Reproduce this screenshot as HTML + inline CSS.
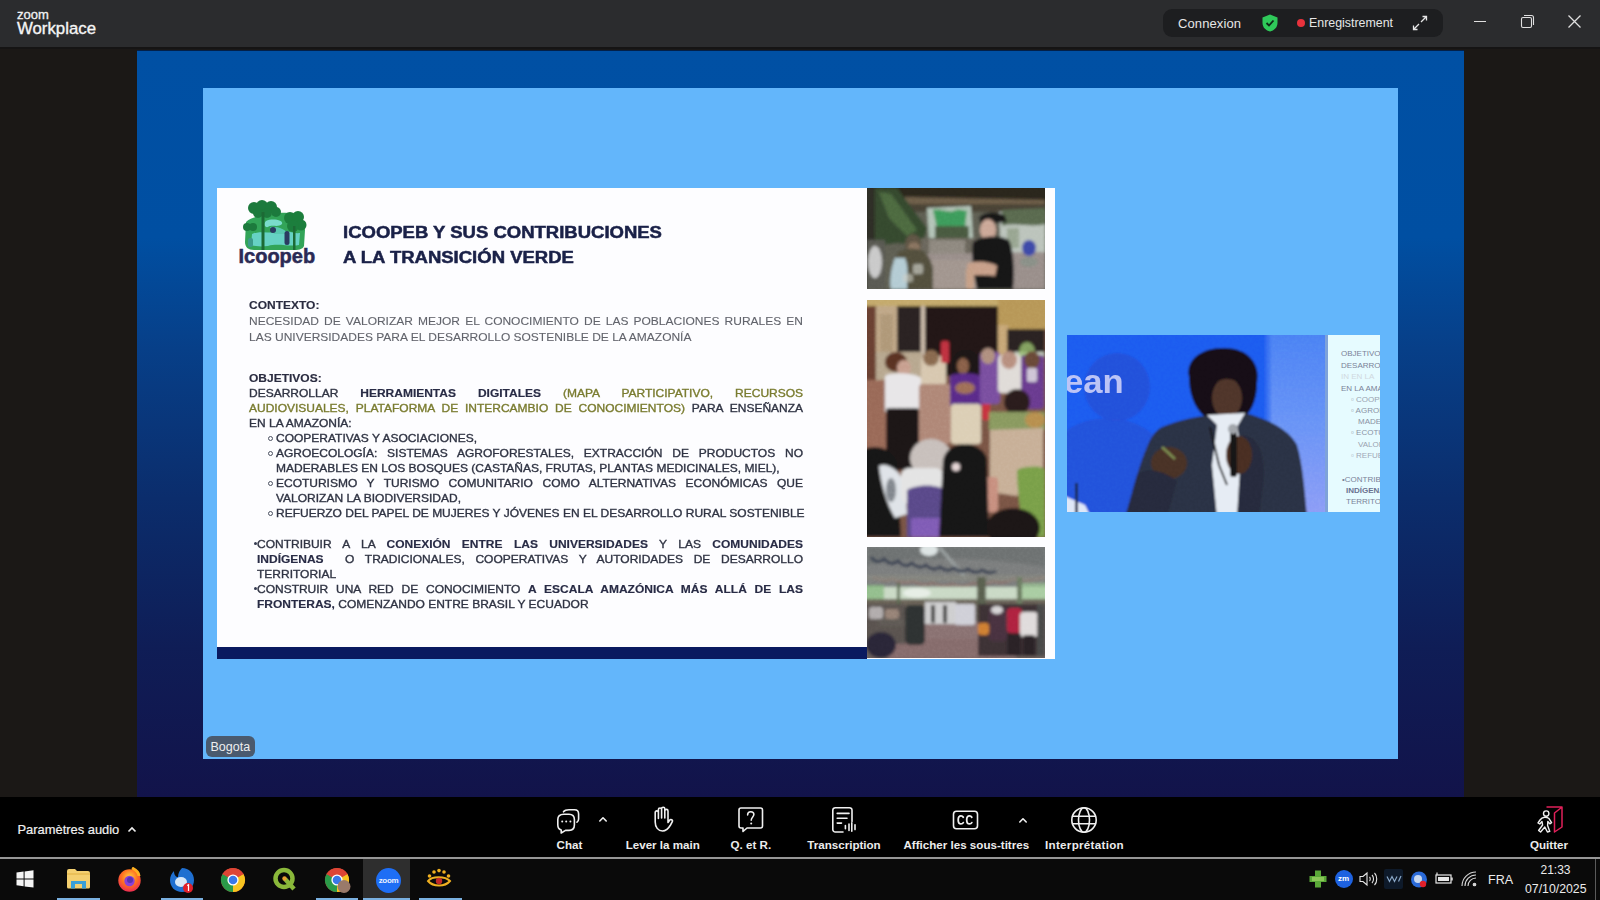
<!DOCTYPE html>
<html><head><meta charset="utf-8">
<style>
*{margin:0;padding:0;box-sizing:border-box}
html,body{width:1600px;height:900px;overflow:hidden;background:#1b1816;font-family:"Liberation Sans",sans-serif;position:relative}
.abs{position:absolute}
.t{position:absolute;white-space:nowrap;line-height:1}
#title{left:0;top:0;width:1600px;height:47px;background:#2b2c2e}
#strip{left:0;top:47px;width:1600px;height:1.5px;background:#151414}
#share{left:136.5px;top:51px;width:1327.5px;height:746px;background:linear-gradient(to bottom,#0050a4 0%,#004fa2 25%,#073f88 40%,#0b2d6c 60%,#0f1d56 80%,#12134a 100%)}
#lb{left:203px;top:88px;width:1195px;height:671px;background:#63b6fb}
#slide{left:217px;top:188px;width:838px;height:471px;background:#fdfdff}
#toolbar{left:0;top:796px;width:1600px;height:62px;background:linear-gradient(to bottom,transparent 0,transparent 1px,#000 1px)}
#sep{left:0;top:857px;width:1600px;height:2px;background:#969696}
#taskbar{left:0;top:859px;width:1600px;height:41px;background:#0a0a0a}
.lbl{position:absolute;white-space:nowrap;line-height:1;color:#ececec;font-size:11.6px;font-weight:700}
.ico{position:absolute;fill:none;stroke:#f0f0f0;stroke-width:1.6;stroke-linecap:round;stroke-linejoin:round}

.st{position:absolute;white-space:nowrap;line-height:1;font-size:11px;transform:scaleX(1.09);transform-origin:0 0;-webkit-text-stroke:0.35px currentColor}
.j{text-align:justify;text-align-last:justify;white-space:normal}
.g1{color:#62646c;-webkit-text-stroke:0.1px currentColor}
.g2{color:#303444}
.nv{color:#282b45;font-weight:700;-webkit-text-stroke:0.15px currentColor}
.ol{color:#7a7c30}
.bul{position:absolute;width:5px;height:5px;border:1px solid #4a5060;border-radius:50%}
.dot{position:absolute;width:3px;height:3px;background:#333a50;border-radius:50%}
.ttl{position:absolute;white-space:nowrap;line-height:1;font-size:16px;font-weight:700;color:#1a2148;transform:scaleX(1.156);transform-origin:0 0;-webkit-text-stroke:0.5px currentColor}
</style></head><body>
<div id="title" class="abs">
  <div class="t" style="left:17px;top:7.5px;font-size:13px;color:#f2f2f2;-webkit-text-stroke:0.3px #f2f2f2">zoom</div>
  <div class="t" style="left:17px;top:21.2px;font-size:16.8px;color:#f5f5f5;-webkit-text-stroke:0.35px #f5f5f5">Workplace</div>
  <div class="abs" style="left:1163px;top:9px;width:280px;height:28px;border-radius:9px;background:#1d1e20"></div>
  <div class="t" style="left:1178px;top:16.5px;font-size:13px;color:#e6e6e6;letter-spacing:0.1px">Connexion</div>
  <svg class="abs" style="left:1260px;top:13px" width="20" height="20" viewBox="0 0 20 20"><path d="M10 1.5 L17.5 4.5 V10 C17.5 14.5 14 17.5 10 18.5 C6 17.5 2.5 14.5 2.5 10 V4.5 Z" fill="#2fc95a"/><path d="M6.5 10 L9 12.5 L13.5 7.5" stroke="#0f2a18" stroke-width="1.8" fill="none"/></svg>
  <div class="abs" style="left:1296.5px;top:19px;width:8px;height:8px;border-radius:50%;background:#e8323c"></div>
  <div class="t" style="left:1309px;top:16.5px;font-size:12.4px;color:#e6e6e6">Enregistrement</div>
  <svg class="abs" style="left:1411px;top:14px" width="18" height="18" viewBox="0 0 18 18" fill="none" stroke="#e6e6e6" stroke-width="1.3"><path d="M10 8 L15.5 2.5 M11.5 2.5 H15.5 V6.5 M8 10 L2.5 15.5 M2.5 11.5 V15.5 H6.5"/></svg>
  <div class="abs" style="left:1474px;top:21px;width:12px;height:1.2px;background:#e0e0e0"></div>
  <svg class="abs" style="left:1520px;top:14px" width="15" height="15" viewBox="0 0 15 15" fill="none" stroke="#e0e0e0" stroke-width="1.1"><rect x="1.5" y="3.5" width="10" height="10" rx="1.5"/><path d="M4 1.5 H11.5 A2 2 0 0 1 13.5 3.5 V11"/></svg>
  <svg class="abs" style="left:1567px;top:14px" width="15" height="15" viewBox="0 0 15 15" stroke="#e0e0e0" stroke-width="1.3"><path d="M1.5 1.5 L13.5 13.5 M13.5 1.5 L1.5 13.5"/></svg>
</div>
<div id="strip" class="abs"></div>
<div id="share" class="abs"></div>
<div class="abs" style="left:136.5px;top:50px;width:1327.5px;height:1px;background:#02204a"></div>
<div id="lb" class="abs"></div>

<div id="slide" class="abs"></div>
<div class="ttl" style="left:343px;top:224.8px">ICOOPEB Y SUS CONTRIBUCIONES</div>
<div class="ttl" style="left:343px;top:250px">A LA TRANSICIÓN VERDE</div>
<svg class="abs" style="left:238px;top:200px" width="72" height="54" viewBox="0 0 72 54">
<defs><filter id="bl"><feGaussianBlur stdDeviation="0.6"/></filter></defs>
<g filter="url(#bl)">
<path d="M8 22 C12 17 22 16 34 14 C44 12 56 12 64 16 L67 30 L66 46 C64 51 56 50 48 50 L16 50 C10 50 7 47 7 42 Z" fill="#30a458"/>
<path d="M14 34 C22 30 34 34 42 32 C50 30 56 34 62 33 L61 45 C52 47 40 43 30 46 C22 47 16 46 13 45 Z" fill="#66d2c4"/>
<path d="M28 21 C34 18 46 20 44 24 C40 28 34 24 30 27 C27 28 25 24 28 21 Z" fill="#7adccc"/>
<path d="M32 27 C40 26 48 30 50 34 L36 34 Z" fill="#58c8b0"/>
<circle cx="16" cy="8" r="6" fill="#1e7a3c"/><circle cx="24" cy="6" r="6" fill="#1e7a3c"/><circle cx="33" cy="7" r="6" fill="#1e7a3c"/><circle cx="38" cy="12" r="5" fill="#1e7a3c"/><circle cx="20" cy="13" r="5" fill="#1e7a3c"/><circle cx="29" cy="13" r="5" fill="#1e7a3c"/>
<circle cx="52" cy="18" r="6" fill="#1f7e3c"/><circle cx="60" cy="17" r="6" fill="#1f7e3c"/><circle cx="63" cy="25" r="5.5" fill="#1f7e3c"/><circle cx="55" cy="26" r="6" fill="#1f7e3c"/>
<circle cx="9" cy="27" r="4" fill="#1e7a3c"/><circle cx="15" cy="27" r="4" fill="#1e7a3c"/>
<rect x="23.5" y="12" width="3" height="38" fill="#1a6a34"/>
<rect x="55" y="26" width="2.5" height="24" fill="#1a6a34"/>
<circle cx="35" cy="30" r="3" fill="#2a3a60"/>
<rect x="46.5" y="31" width="5" height="14" rx="2.5" fill="#2a3a60"/>
<rect x="10" y="38" width="5" height="9" rx="2" fill="#3a9a8a"/>
</g></svg>
<div class="t" style="left:238.5px;top:246px;font-size:20px;font-weight:700;color:#2a2a55;-webkit-text-stroke:0.5px #2a2a55">Icoopeb</div>
<div class="abs" style="left:217px;top:647px;width:650px;height:12px;background:#0a1a60"></div>
<div class="st g1" style="left:249px;top:299.8px"><b class="nv" style="color:#2a2c40">CONTEXTO:</b></div>
<div class="st g1 j" style="left:249px;top:316.2px;width:508.3px">NECESIDAD DE VALORIZAR MEJOR EL CONOCIMIENTO DE LAS POBLACIONES RURALES EN</div>
<div class="st g1" style="left:249px;top:332.2px">LAS UNIVERSIDADES PARA EL DESARROLLO SOSTENIBLE DE LA AMAZONÍA</div>
<div class="st g2" style="left:249px;top:372.6px"><b class="nv" style="color:#2a2c40">OBJETIVOS:</b></div>
<div class="st g2 j" style="left:249px;top:387.6px;width:508.3px">DESARROLLAR <b class="nv">HERRAMIENTAS DIGITALES</b> <span class="ol">(MAPA PARTICIPATIVO, RECURSOS</span></div>
<div class="st g2 j" style="left:249px;top:402.6px;width:508.3px"><span class="ol">AUDIOVISUALES, PLATAFORMA DE INTERCAMBIO DE CONOCIMIENTOS)</span> PARA ENSEÑANZA</div>
<div class="st g2" style="left:249px;top:417.6px">EN LA AMAZONÍA:</div>
<div class="st g2" style="left:276px;top:432.6px">COOPERATIVAS Y ASOCIACIONES,</div>
<div class="st g2 j" style="left:276px;top:447.6px;width:483.5px">AGROECOLOGÍA: SISTEMAS AGROFORESTALES, EXTRACCIÓN DE PRODUCTOS NO</div>
<div class="st g2" style="left:276px;top:462.6px">MADERABLES EN LOS BOSQUES (CASTAÑAS, FRUTAS, PLANTAS MEDICINALES, MIEL),</div>
<div class="st g2 j" style="left:276px;top:477.6px;width:483.5px">ECOTURISMO Y TURISMO COMUNITARIO COMO ALTERNATIVAS ECONÓMICAS QUE</div>
<div class="st g2" style="left:276px;top:492.6px">VALORIZAN LA BIODIVERSIDAD,</div>
<div class="st g2" style="left:276px;top:507.6px">REFUERZO DEL PAPEL DE MUJERES Y JÓVENES EN EL DESARROLLO RURAL SOSTENIBLE</div>
<div class="st g2 j" style="left:257px;top:538.6px;width:500.9px">CONTRIBUIR A LA <b class="nv">CONEXIÓN ENTRE LAS UNIVERSIDADES</b> Y LAS <b class="nv">COMUNIDADES</b></div>
<div class="st g2 j" style="left:257px;top:553.6px;width:500.9px"><b class="nv">INDÍGENAS</b>&nbsp; O TRADICIONALES, COOPERATIVAS Y AUTORIDADES DE DESARROLLO</div>
<div class="st g2" style="left:257px;top:568.6px">TERRITORIAL</div>
<div class="st g2 j" style="left:257px;top:583.6px;width:500.9px">CONSTRUIR UNA RED DE CONOCIMIENTO <b class="nv">A ESCALA AMAZÓNICA MÁS ALLÁ DE LAS</b></div>
<div class="st g2" style="left:257px;top:598.6px"><b class="nv">FRONTERAS,</b> COMENZANDO ENTRE BRASIL Y ECUADOR</div>
<div class="bul" style="left:267.5px;top:435.9px"></div>
<div class="bul" style="left:267.5px;top:450.9px"></div>
<div class="bul" style="left:267.5px;top:480.9px"></div>
<div class="bul" style="left:267.5px;top:510.9px"></div>
<div class="dot" style="left:253.5px;top:541.9px"></div>
<div class="dot" style="left:253.5px;top:586.9px"></div>
<svg class="abs" style="left:867px;top:188px" width="178" height="101" viewBox="0 0 178 101"><defs><filter id="ph1" x="-5%" y="-5%" width="110%" height="110%"><feGaussianBlur stdDeviation="1.4"/></filter><clipPath id="ph1c"><rect width="178" height="101"/></clipPath></defs><filter id="ph1n"><feTurbulence type="fractalNoise" baseFrequency="0.35" numOctaves="2" seed="3"/><feColorMatrix values="0 0 0 0 0.5  0 0 0 0 0.5  0 0 0 0 0.5  0 0 0 1.2 -0.45"/></filter><g clip-path="url(#ph1c)"><g filter="url(#ph1)"><rect x="-5" y="-5" width="190" height="115" rx="0" fill="#5e5e52" opacity="1"/><rect x="-5" y="-5" width="190" height="22" rx="0" fill="#2c271e" opacity="1"/><path d="M38 9 L178 12 L178 18 L38 16 Z" fill="#6e5e4a" opacity="1"/><rect x="40" y="16" width="140" height="8" rx="0" fill="#4a4236" opacity="1"/><path d="M60 20 L104 18 L106 50 L62 52 Z" fill="#b4c4b8" opacity="1"/><path d="M66 22 C74 20 84 26 88 22 C94 20 98 24 100 22 L98 40 C90 42 80 36 70 40 Z" fill="#3c9c5c" opacity="1"/><rect x="68" y="38" width="34" height="16" rx="0" fill="#4a5a40" opacity="1"/><path d="M132 24 L178 22 L178 70 L134 66 Z" fill="#bcc4bc" opacity="1"/><path d="M135 22 L178 20 L178 36 C165 40 150 34 135 38 Z" fill="#5a6a50" opacity="1"/><rect x="140" y="40" width="12" height="20" rx="0" fill="#8a9a80" opacity="0.7"/><path d="M-5 0 L30 0 L60 40 L55 58 L30 55 L-5 60 Z" fill="#34482e" opacity="1"/><path d="M12 4 L24 6 L50 42 L40 48 L22 30 Z" fill="#4e6a40" opacity="1"/><rect x="-2" y="0" width="10" height="101" rx="0" fill="#2e2e28" opacity="1"/><rect x="54" y="50" width="80" height="22" rx="0" fill="#6a665c" opacity="1"/><rect x="62" y="52" width="36" height="14" rx="0" fill="#a8a098" opacity="0.6"/><path d="M56 66 L178 64 L178 101 L56 101 Z" fill="#9a8f8b" opacity="1"/><rect x="60" y="72" width="50" height="29" rx="0" fill="#a2968f" opacity="1"/><rect x="0" y="52" width="18" height="49" rx="0" fill="#5a5a52" opacity="1"/><ellipse cx="8" cy="74" rx="7" ry="16" fill="#cacaca" opacity="1"/><ellipse cx="46" cy="56" rx="8" ry="10" fill="#5e5444" opacity="1"/><ellipse cx="47" cy="60" rx="6" ry="6" fill="#8a7460" opacity="1"/><path d="M30 66 C34 60 46 60 54 62 C60 64 64 72 66 80 L66 101 L28 101 Z" fill="#52503e" opacity="1"/><path d="M28 70 C24 80 22 95 24 101 L40 101 C40 90 42 80 38 70 Z" fill="#b4ccd4" opacity="1"/><rect x="46" y="76" width="10" height="10" rx="2" fill="#c8c8c0" opacity="0.7"/><rect x="36" y="86" width="10" height="8" rx="2" fill="#d0d0c8" opacity="0.6"/><path d="M112 30 C114 24 132 22 138 28 L140 34 L114 36 Z" fill="#131315" opacity="1"/><ellipse cx="121" cy="42" rx="8" ry="11" fill="#cca898" opacity="1"/><path d="M106 54 C112 48 132 46 142 52 C146 60 148 80 146 101 L110 101 C106 85 104 65 106 54 Z" fill="#141318" opacity="1"/><path d="M100 76 C108 72 124 74 130 78 L128 88 C118 86 108 88 101 86 Z" fill="#c8a08a" opacity="1"/><rect x="99" y="80" width="8" height="21" rx="3" fill="#c6a088" opacity="1"/><ellipse cx="162" cy="60" rx="7" ry="8" fill="#3c4aa8" opacity="1"/><ellipse cx="162" cy="74" rx="9" ry="5" fill="#8a9088" opacity="1"/></g><rect width="178" height="101" filter="url(#ph1n)" opacity="0.18" style="mix-blend-mode:overlay"/></g></svg><svg class="abs" style="left:867px;top:300px" width="178" height="237" viewBox="0 0 178 237"><defs><filter id="ph2" x="-5%" y="-5%" width="110%" height="110%"><feGaussianBlur stdDeviation="1.6"/></filter><clipPath id="ph2c"><rect width="178" height="237"/></clipPath></defs><filter id="ph2n"><feTurbulence type="fractalNoise" baseFrequency="0.35" numOctaves="2" seed="3"/><feColorMatrix values="0 0 0 0 0.5  0 0 0 0 0.5  0 0 0 0 0.5  0 0 0 1.2 -0.45"/></filter><g clip-path="url(#ph2c)"><g filter="url(#ph2)"><rect x="-5" y="-5" width="190" height="250" rx="0" fill="#7a5444" opacity="1"/><rect x="-5" y="-5" width="190" height="11" rx="0" fill="#c4aa6c" opacity="1"/><rect x="-5" y="6" width="14" height="80" rx="0" fill="#6a4030" opacity="1"/><rect x="9" y="6" width="21" height="80" rx="0" fill="#c0a888" opacity="1"/><rect x="13" y="14" width="13" height="62" rx="0" fill="#a08a6a" opacity="0.5"/><rect x="30" y="6" width="25" height="48" rx="0" fill="#2a2020" opacity="1"/><rect x="54" y="6" width="5" height="50" rx="0" fill="#ccbcaa" opacity="1"/><rect x="58" y="6" width="74" height="70" rx="0" fill="#201818" opacity="1"/><rect x="131" y="-2" width="50" height="31" rx="0" fill="#b89858" opacity="1"/><rect x="131" y="25" width="10" height="50" rx="0" fill="#c8a878" opacity="1"/><rect x="140" y="29" width="38" height="27" rx="0" fill="#2a2420" opacity="1"/><rect x="147" y="52" width="30" height="16" rx="0" fill="#c4ccbc" opacity="1"/><ellipse cx="160" cy="52" rx="8" ry="10" fill="#9ac070" opacity="0.8"/><rect x="9" y="52" width="46" height="28" rx="0" fill="#b8a890" opacity="1"/><rect x="-5" y="80" width="30" height="75" rx="0" fill="#9a6a58" opacity="1"/><ellipse cx="29" cy="62" rx="11" ry="10" fill="#5a3020" opacity="1"/><ellipse cx="37" cy="68" rx="7" ry="8" fill="#c8a090" opacity="1"/><path d="M18 76 C22 72 48 72 54 78 L56 112 L18 112 Z" fill="#e8e6e8" opacity="1"/><rect x="19" y="108" width="33" height="62" rx="3" fill="#1e1818" opacity="1"/><rect x="54" y="56" width="25" height="30" rx="4" fill="#d8c8b0" opacity="1"/><ellipse cx="64" cy="58" rx="8" ry="8" fill="#8a6a50" opacity="1"/><rect x="52" y="84" width="32" height="60" rx="4" fill="#b08878" opacity="1"/><rect x="74" y="41" width="8" height="22" rx="2" fill="#c03040" opacity="1"/><ellipse cx="99" cy="66" rx="14" ry="16" fill="#1a1414" opacity="1"/><ellipse cx="96" cy="66" rx="6" ry="8" fill="#8a6048" opacity="1"/><path d="M83 76 C88 72 112 72 117 78 L117 106 L83 106 Z" fill="#5a2c8a" opacity="1"/><ellipse cx="98" cy="88" rx="10" ry="6" fill="#a07058" opacity="1"/><rect x="84" y="104" width="30" height="40" rx="3" fill="#dccfb6" opacity="1"/><rect x="115" y="101" width="8" height="19" rx="2" fill="#c83040" opacity="1"/><rect x="113" y="52" width="20" height="52" rx="4" fill="#7a50a0" opacity="1"/><ellipse cx="121" cy="56" rx="7" ry="8" fill="#b09080" opacity="1"/><rect x="131" y="55" width="23" height="38" rx="4" fill="#e0dcd8" opacity="1"/><ellipse cx="142" cy="60" rx="8" ry="9" fill="#b89080" opacity="1"/><rect x="154" y="55" width="23" height="54" rx="4" fill="#6a3a90" opacity="1"/><ellipse cx="165" cy="60" rx="8" ry="9" fill="#6a4a38" opacity="1"/><rect x="160" y="68" width="10" height="14" rx="2" fill="#e8e8e8" opacity="0.8"/><ellipse cx="150" cy="102" rx="13" ry="13" fill="#2a1e1a" opacity="1"/><rect x="122" y="112" width="56" height="18" rx="0" fill="#8a9a60" opacity="1"/><ellipse cx="168" cy="120" rx="10" ry="8" fill="#b89050" opacity="1"/><path d="M123 130 L176 128 L176 170 L150 196 L123 192 Z" fill="#c8b098" opacity="1"/><path d="M150 170 C160 165 178 166 178 170 L178 237 L158 237 C154 220 150 190 150 170 Z" fill="#7aa048" opacity="1"/><rect x="116" y="177" width="15" height="35" rx="4" fill="#c89080" opacity="1"/><path d="M-5 150 C6 144 24 146 30 162 L34 237 L-5 237 Z" fill="#161314" opacity="1"/><path d="M12 166 C20 162 34 170 38 186 L40 214 L28 218 C20 205 14 185 12 166 Z" fill="#dfe3e8" opacity="1"/><ellipse cx="24" cy="190" rx="5" ry="12" fill="#5a6068" opacity="0.7"/><ellipse cx="64" cy="158" rx="21" ry="19" fill="#c8c0bc" opacity="1"/><rect x="34" y="168" width="42" height="36" rx="8" fill="#e4e4e4" opacity="1"/><path d="M40 190 C50 184 70 184 78 190 L78 237 L40 237 Z" fill="#5a4a8a" opacity="1"/><rect x="44" y="218" width="34" height="19" rx="3" fill="#8a60c0" opacity="0.8"/><path d="M76 160 C80 140 112 138 120 158 L122 237 L72 237 Z" fill="#141214" opacity="1"/><ellipse cx="89" cy="167" rx="4" ry="4" fill="#e8d8d8" opacity="1"/><ellipse cx="146" cy="228" rx="27" ry="20" fill="#1a1616" opacity="1"/></g><rect width="178" height="237" filter="url(#ph2n)" opacity="0.18" style="mix-blend-mode:overlay"/></g></svg><svg class="abs" style="left:867px;top:547px" width="178" height="111" viewBox="0 0 178 111"><defs><filter id="ph3" x="-5%" y="-5%" width="110%" height="110%"><feGaussianBlur stdDeviation="1.5"/></filter><clipPath id="ph3c"><rect width="178" height="111"/></clipPath></defs><filter id="ph3n"><feTurbulence type="fractalNoise" baseFrequency="0.35" numOctaves="2" seed="3"/><feColorMatrix values="0 0 0 0 0.5  0 0 0 0 0.5  0 0 0 0 0.5  0 0 0 1.2 -0.45"/></filter><g clip-path="url(#ph3c)"><g filter="url(#ph3)"><rect x="-5" y="-5" width="190" height="120" rx="0" fill="#6a5e5c" opacity="1"/><rect x="-5" y="-5" width="190" height="46" rx="0" fill="#7c7e7e" opacity="1"/><path d="M0 0 L178 0 L178 20 C120 10 60 8 0 18 Z" fill="#6e7272" opacity="1"/><ellipse cx="62" cy="3" rx="9" ry="6" fill="#dde4e4" opacity="1"/><path d="M72 0 L98 30" stroke="#9aa0a0" stroke-width="3" fill="none"/><path d="M4 10 Q10 18 17 12 Q24 20 31 14 Q38 22 45 16 Q52 23 59 18 Q66 25 73 20 Q80 26 87 21 Q94 27 101 22 Q108 28 115 23 Q122 28 129 24" stroke="#3a4252" stroke-width="3" fill="none"/><path d="M6 30 Q16 36 26 32 Q36 38 46 34 Q56 40 66 36 Q76 41 86 37 Q96 42 106 36 Q116 40 126 34 Q136 38 146 32 Q160 36 178 30" stroke="#8a7670" stroke-width="3" fill="none"/><rect x="-5" y="28" width="190" height="6" rx="0" fill="#8a8a80" opacity="0.6"/><rect x="-5" y="40" width="190" height="14" rx="0" fill="#cadac6" opacity="1"/><rect x="-5" y="38" width="22" height="18" rx="0" fill="#86b880" opacity="0.8"/><rect x="150" y="36" width="30" height="18" rx="0" fill="#9cc894" opacity="0.7"/><ellipse cx="50" cy="46" rx="14" ry="5" fill="#eef2ee" opacity="0.8"/><rect x="-5" y="52" width="190" height="7" rx="0" fill="#6a6458" opacity="1"/><rect x="110" y="30" width="9" height="58" rx="0" fill="#5a6050" opacity="1"/><rect x="150" y="30" width="5" height="28" rx="0" fill="#6a7a60" opacity="1"/><rect x="30" y="36" width="3" height="22" rx="0" fill="#5a6a50" opacity="1"/><path d="M30 76 L120 74 L150 111 L20 111 Z" fill="#8a7272" opacity="1"/><rect x="20" y="92" width="120" height="20" rx="0" fill="#846a6a" opacity="0.8"/><rect x="-2" y="57" width="40" height="40" rx="0" fill="#5a5250" opacity="1"/><rect x="2" y="60" width="14" height="12" rx="3" fill="#c8c4c4" opacity="0.8"/><rect x="12" y="72" width="26" height="7" rx="0" fill="#5e5a54" opacity="1"/><rect x="18" y="62" width="14" height="10" rx="3" fill="#b09888" opacity="0.7"/><rect x="38" y="58" width="20" height="40" rx="5" fill="#2e3030" opacity="1"/><rect x="58" y="55" width="31" height="22" rx="0" fill="#cfcfd0" opacity="1"/><rect x="64" y="58" width="4" height="18" rx="0" fill="#3a3838" opacity="1"/><rect x="76" y="58" width="4" height="18" rx="0" fill="#3a3838" opacity="1"/><ellipse cx="14" cy="98" rx="15" ry="13" fill="#2a2838" opacity="1"/><rect x="88" y="57" width="20" height="21" rx="2" fill="#d0d0d8" opacity="1"/><rect x="111" y="57" width="67" height="52" rx="0" fill="#3c3034" opacity="1"/><rect x="111" y="76" width="11" height="12" rx="3" fill="#d08030" opacity="1"/><rect x="122" y="61" width="18" height="33" rx="4" fill="#4a3040" opacity="1"/><ellipse cx="130" cy="63" rx="6" ry="4" fill="#e8e8e8" opacity="0.9"/><rect x="140" y="61" width="15" height="25" rx="4" fill="#b02040" opacity="1"/><rect x="153" y="65" width="18" height="25" rx="4" fill="#e0dcdc" opacity="1"/><rect x="140" y="86" width="14" height="23" rx="3" fill="#2a2426" opacity="1"/><rect x="156" y="88" width="12" height="21" rx="3" fill="#2a2426" opacity="1"/><rect x="170" y="57" width="8" height="52" rx="0" fill="#4a4a48" opacity="1"/></g><rect width="178" height="111" filter="url(#ph3n)" opacity="0.18" style="mix-blend-mode:overlay"/></g></svg>
<svg class="abs" style="left:1067px;top:335px" width="313" height="177" viewBox="0 0 313 177"><defs><filter id="vid" x="-5%" y="-5%" width="110%" height="110%"><feGaussianBlur stdDeviation="0.9"/></filter><clipPath id="vidc"><rect width="313" height="177"/></clipPath></defs><filter id="vidn"><feTurbulence type="fractalNoise" baseFrequency="0.35" numOctaves="2" seed="3"/><feColorMatrix values="0 0 0 0 0.5  0 0 0 0 0.5  0 0 0 0 0.5  0 0 0 1.2 -0.45"/></filter><g clip-path="url(#vidc)"><g filter="url(#vid)"><defs><linearGradient id="vbg2" x1="0" x2="0" y1="0" y2="1"><stop offset="0" stop-color="#4a82f4"/><stop offset="0.5" stop-color="#6a94f6"/><stop offset="1" stop-color="#909ef6"/></linearGradient></defs><rect x="-5" y="-5" width="323" height="187" rx="0" fill="#1c5cf0" opacity="1"/><rect x="201" y="-5" width="60" height="190" rx="0" fill="url(#vbg2)" opacity="1"/><rect x="198" y="-5" width="6" height="190" rx="0" fill="#3a72f2" opacity="0.7"/><ellipse cx="50" cy="52" rx="33" ry="34" fill="#2650d8" opacity="0.9"/><path d="M-5 100 C10 84 40 80 60 86 C85 92 100 110 104 140 L106 182 L-5 182 Z" fill="#2650d8" opacity="0.85"/><path d="M122 42 C118 24 136 12 158 13 C180 13 194 28 190 48 C190 62 186 74 178 82 L138 82 C126 72 122 56 122 42 Z" fill="#131114" opacity="1"/><ellipse cx="160" cy="63" rx="15" ry="20" fill="#50342a" opacity="1"/><path d="M142 36 C150 26 174 26 180 38 L178 50 C168 42 152 42 144 50 Z" fill="#131114" opacity="1"/><path d="M95 92 C115 84 135 80 150 80 L178 78 C200 84 222 94 230 110 C236 130 238 160 240 182 L60 182 C64 160 72 130 80 112 C84 102 88 96 95 92 Z" fill="#2b3244" opacity="1"/><path d="M140 80 L178 78 L176 120 L170 182 L150 182 L144 120 Z" fill="#e6ecf4" opacity="1"/><path d="M140 80 L150 90 L145 130 L135 110 Z" fill="#2b3244" opacity="1"/><path d="M178 78 L170 92 L178 135 L188 110 Z" fill="#2b3244" opacity="1"/><path d="M143 92 L152 130 L160 150" stroke="#151518" stroke-width="2" fill="none"/><path d="M175 100 C190 100 200 120 196 150 L192 182 L170 182 Z" fill="#262c3c" opacity="1"/><ellipse cx="172" cy="120" rx="13" ry="19" fill="#4a2e24" opacity="1"/><rect x="163" y="94" width="7" height="48" rx="3" fill="#151515" opacity="1"/><ellipse cx="166" cy="94" rx="5" ry="5" fill="#a0a4aa" opacity="1"/><ellipse cx="102" cy="128" rx="18" ry="16" fill="#4a3026" opacity="1"/><path d="M70 140 C80 130 100 138 110 146 L100 182 L58 182 Z" fill="#262c3c" opacity="1"/><path d="M95 112 L108 124" stroke="#7a8a50" stroke-width="2.5"/><path d="M-5 160 L18 170 L24 182 L-5 182 Z" fill="#dfe8f8" opacity="1"/><rect x="8" y="148" width="3" height="34" rx="0" fill="#1a2a50" opacity="1"/></g><rect width="313" height="177" filter="url(#vidn)" opacity="0.18" style="mix-blend-mode:overlay"/></g></svg><div class="abs" style="left:1067px;top:335px;width:313px;height:177px;overflow:hidden"><div class="t" style="left:-3px;top:30px;font-size:33px;font-weight:700;color:#bcc4f6;filter:blur(0.5px);transform:scaleX(1.05);transform-origin:0 0">ean</div><div class="abs" style="left:257.5px;top:0;width:3px;height:177px;background:#7ea2da;filter:blur(0.6px)"></div><div class="abs" style="left:260.5px;top:0;width:53px;height:177px;background:#e6fbff"></div><div class="t" style="left:274px;top:14.5px;font-size:8px;font-weight:400;color:#7a8298;transform:scaleX(1.0);transform-origin:0 0">OBJETIVOS:</div><div class="t" style="left:274px;top:26.5px;font-size:8px;font-weight:400;color:#7a8298;transform:scaleX(1.0);transform-origin:0 0">DESARROLLAR</div><div class="t" style="left:274px;top:37.5px;font-size:8px;font-weight:400;color:#d0d8e0;transform:scaleX(1.0);transform-origin:0 0">IN EN LA</div><div class="t" style="left:274px;top:49.5px;font-size:8px;font-weight:400;color:#7a8298;transform:scaleX(1.0);transform-origin:0 0">EN LA AMAZONÍA</div><div class="t" style="left:284px;top:60.5px;font-size:8px;font-weight:400;color:#9aa2b0;transform:scaleX(1.0);transform-origin:0 0">▫ COOPERATIVAS</div><div class="t" style="left:284px;top:71.5px;font-size:8px;font-weight:400;color:#8a92a4;transform:scaleX(1.0);transform-origin:0 0">▫ AGROECOLOGÍA</div><div class="t" style="left:291px;top:82.5px;font-size:8px;font-weight:400;color:#8a92a4;transform:scaleX(1.0);transform-origin:0 0">MADERABLES</div><div class="t" style="left:284px;top:93.5px;font-size:8px;font-weight:400;color:#8a92a4;transform:scaleX(1.0);transform-origin:0 0">▫ ECOTURISMO</div><div class="t" style="left:291px;top:105.5px;font-size:8px;font-weight:400;color:#9aa2b0;transform:scaleX(1.0);transform-origin:0 0">VALORIZAN</div><div class="t" style="left:284px;top:116.5px;font-size:8px;font-weight:400;color:#a0a8b8;transform:scaleX(1.0);transform-origin:0 0">▫ REFUERZO</div><div class="t" style="left:275px;top:140.5px;font-size:8px;font-weight:400;color:#7a8298;transform:scaleX(1.0);transform-origin:0 0">•CONTRIBUIR</div><div class="t" style="left:279px;top:151.5px;font-size:8px;font-weight:700;color:#6a7290;transform:scaleX(1.0);transform-origin:0 0">INDÍGENAS</div><div class="t" style="left:279px;top:162.5px;font-size:8px;font-weight:400;color:#7a8298;transform:scaleX(1.0);transform-origin:0 0">TERRITORIAL</div></div>
<div class="abs" style="left:206px;top:736px;width:49px;height:21px;border-radius:6px;background:#4a5a6e"></div>
<div class="t" style="left:210.5px;top:740.5px;font-size:12.5px;color:#eeeeee">Bogota</div>
<div id="toolbar" class="abs">
  <div class="t" style="left:17.5px;top:27.5px;font-size:12.9px;color:#f0f0f0;-webkit-text-stroke:0.2px #f0f0f0">Paramètres audio</div>
  <svg class="abs" style="left:127px;top:30px" width="10" height="7" viewBox="0 0 10 7" fill="none" stroke="#f0f0f0" stroke-width="1.6"><path d="M1.5 5.5 L5 2 L8.5 5.5"/></svg>
  <!-- chat -->
  <svg class="ico" style="left:556px;top:11px" width="26" height="28" viewBox="0 0 26 28"><path d="M7.5 4.8 C8.5 3.4 10.5 2.8 13 2.8 H18.5 C21 2.8 22.6 4.4 22.6 7 V12 C22.6 13.5 22 14.5 21 15.2"/><path d="M7.8 7.2 H13 C16.6 7.2 18.4 9 18.4 12.6 V17.8 C18.4 21.4 16.6 23.4 13 23.4 H9.5 L5.2 26 V23 C3 22.4 1.8 20.6 1.8 17.8 V12.6 C1.8 9 3.8 7.2 7.8 7.2 Z"/><circle cx="6.2" cy="14.6" r="1" fill="#f0f0f0" stroke="none"/><circle cx="10.2" cy="14.6" r="1" fill="#f0f0f0" stroke="none"/><circle cx="14.4" cy="14.6" r="1" fill="#f0f0f0" stroke="none"/></svg>
  <svg class="ico" style="left:598px;top:20px" width="10" height="7" viewBox="0 0 10 7"><path d="M1.8 5 L5 1.8 L8.2 5"/></svg>
  <div class="lbl" style="left:529.5px;width:80px;text-align:center;top:42.5px">Chat</div>
  <!-- hand -->
  <svg class="ico" style="left:650px;top:10px" width="24" height="27" viewBox="0 0 24 27"><path transform="translate(24,0) scale(-1,1)" d="M6 14 V5 A1.6 1.6 0 0 1 9.2 5 V12 M9.2 12 V2.8 A1.6 1.6 0 0 1 12.4 2.8 V12 M12.4 12 V3.6 A1.6 1.6 0 0 1 15.6 3.6 V12.5 M15.6 12.5 V6.5 A1.6 1.6 0 0 1 18.8 6.5 V16 C18.8 21 16 25 11.5 25 C7.5 25 5.5 22.5 3.5 19 L1.8 15.8 A1.5 1.5 0 0 1 4.4 14.3 L6 16.5 V14"/></svg>
  <div class="lbl" style="left:612.75px;width:100px;text-align:center;top:42.5px">Lever la main</div>
  <!-- Q&A -->
  <svg class="ico" style="left:737px;top:10px" width="27" height="27" viewBox="0 0 27 27"><path d="M4 2 H23.5 A2 2 0 0 1 25.5 4 V20 A2 2 0 0 1 23.5 22 H10 L6 25.5 V22 H4 A2 2 0 0 1 2 20 V4 A2 2 0 0 1 4 2 Z"/><path d="M10.6 9 C10.6 6.8 12 5.8 13.8 5.8 C15.6 5.8 16.9 7 16.9 8.6 C16.9 10.8 14.2 11.2 14.2 14.2" stroke-width="1.5"/><circle cx="14.2" cy="17.6" r="1" fill="#f0f0f0" stroke="none"/></svg>
  <div class="lbl" style="left:700.85px;width:100px;text-align:center;top:42.5px">Q. et R.</div>
  <!-- transcription -->
  <svg class="ico" style="left:831px;top:10px" width="27" height="28" viewBox="0 0 27 28"><path d="M21 15.5 V4.2 A2.5 2.5 0 0 0 18.5 1.7 H4.3 A2.5 2.5 0 0 0 1.8 4.2 V23.5 A2.5 2.5 0 0 0 4.3 26 H12"/><path d="M6.2 7.4 H18 M6.2 12.2 H16 M6.2 17.1 H10.5"/><path d="M14.4 19.6 V22.8 M18 18 V24.4 M20.8 16.7 V25.3 M24 18.7 V23.6" stroke-width="1.6"/></svg>
  <div class="lbl" style="left:794px;width:100px;text-align:center;top:42.5px">Transcription</div>
  <!-- CC -->
  <svg class="ico" style="left:952px;top:14px" width="27" height="20" viewBox="0 0 27 20"><rect x="1.5" y="1.2" width="24" height="17.5" rx="3"/><path d="M11.3 7.2 C10.8 6.3 10 5.9 9 5.9 C7.3 5.9 6.2 7.3 6.2 9.9 C6.2 12.5 7.3 13.9 9 13.9 C10 13.9 10.8 13.5 11.3 12.6 M19.8 7.2 C19.3 6.3 18.5 5.9 17.5 5.9 C15.8 5.9 14.7 7.3 14.7 9.9 C14.7 12.5 15.8 13.9 17.5 13.9 C18.5 13.9 19.3 13.5 19.8 12.6" stroke-width="1.8"/></svg>
  <svg class="ico" style="left:1018px;top:20.5px" width="10" height="7" viewBox="0 0 10 7"><path d="M1.8 5 L5 1.8 L8.2 5"/></svg>
  <div class="lbl" style="left:903.5px;width:120px;text-align:center;top:42.5px">Afficher les sous-titres</div>
  <!-- globe -->
  <svg class="ico" style="left:1070px;top:10px" width="28" height="28" viewBox="0 0 28 28"><circle cx="14" cy="14" r="12.2"/><ellipse cx="14" cy="14" rx="5.5" ry="12.2"/><path d="M2.6 10.2 H25.4 M2.6 17.8 H25.4"/></svg>
  <div class="lbl" style="left:1034.5px;width:100px;text-align:center;top:42.5px;letter-spacing:0.3px">Interprétation</div>
  <!-- quitter -->
  <svg class="abs" style="left:1535px;top:9px" width="30" height="30" viewBox="0 0 30 30"><path d="M11.5 2 H27 V22 L19.5 27 V8 L26.5 2.5" fill="none" stroke="#e0205a" stroke-width="1.5" stroke-linejoin="round"/><g fill="none" stroke="#f0f0f0" stroke-width="1.4" stroke-linejoin="round"><circle cx="11.2" cy="8.6" r="2.7"/><path d="M9.5 12.3 C7.5 12.5 6 13.5 5 15 L3 18 L4.8 19 L7 16.5 L7.6 20 L3.6 25.5 L5.6 27 L9.8 22 L12.4 27 L14.8 26.4 L12.6 20.5 L12.8 16.5 L14.8 18.8 L16.6 17.6 L14 13.6 C13 12.6 11.5 12.2 9.5 12.3 Z"/></g></svg>
  <div class="lbl" style="left:1509px;width:80px;text-align:center;top:42.5px">Quitter</div>
</div>
<div id="sep" class="abs"></div>
<div id="taskbar" class="abs">
  <!-- windows -->
  <svg class="abs" style="left:16px;top:11px" width="18" height="18" viewBox="0 0 18 18" fill="#f4f4f4"><path d="M0.5 2.6 L7.6 1.6 V8.4 H0.5 Z M8.6 1.5 L17.5 0.3 V8.4 H8.6 Z M0.5 9.4 H7.6 V16.3 L0.5 15.3 Z M8.6 9.4 H17.5 V17.6 L8.6 16.4 Z"/></svg>
  <!-- explorer -->
  <svg class="abs" style="left:66px;top:9px" width="25" height="21" viewBox="0 0 25 21"><path d="M1 3 A2 2 0 0 1 3 1 H9 L11 3 H22 A2 2 0 0 1 24 5 V19 A1.5 1.5 0 0 1 22.5 20.5 H2.5 A1.5 1.5 0 0 1 1 19 Z" fill="#f4d070"/><path d="M1 6 H24" stroke="#e0b040" stroke-width="1"/><path d="M5 20.5 V13 H20 V20.5 H16 V16 H9 V20.5 Z" fill="#3aa0d8"/></svg>
  <div class="abs" style="left:57px;top:39px;width:43px;height:2px;background:#7ab0e0"></div>
  <!-- firefox -->
  <svg class="abs" style="left:117px;top:8px" width="25" height="25" viewBox="0 0 25 25"><defs><radialGradient id="ff" cx="0.5" cy="0.35" r="0.7"><stop offset="0" stop-color="#ffd040"/><stop offset="0.5" stop-color="#ff7020"/><stop offset="1" stop-color="#e8205a"/></radialGradient></defs><circle cx="12.5" cy="13.5" r="11.2" fill="url(#ff)"/><path d="M15 1 C19 3 22 6 22 9" stroke="#ffb020" stroke-width="3" fill="none"/><circle cx="12.5" cy="14" r="5.2" fill="#8a40d8"/><circle cx="13" cy="13" r="3" fill="#5a30b0"/></svg>
  <!-- thunderbird -->
  <svg class="abs" style="left:168px;top:8px" width="28" height="27" viewBox="0 0 28 27"><path d="M14 1 C21 1 26 6 26 13 C26 20 21 25 14 25 C7 25 2 20 2 13 C2 9 4 6 6 4 C6 8 8 10 10 10 C10 6 12 3 14 1 Z" fill="#1f6fd0"/><ellipse cx="13" cy="15" rx="6" ry="5" fill="#d8e8f8"/><circle cx="20" cy="21" r="5" fill="#e0202a"/><path d="M19.2 18.5 L20.5 17.8 V24" stroke="#fff" stroke-width="1.2" fill="none"/></svg>
  <div class="abs" style="left:161px;top:39px;width:42px;height:2px;background:#7ab0e0"></div>
  <!-- chrome -->
  <svg class="abs" style="left:220px;top:8px" width="26" height="26" viewBox="0 0 26 26"><circle cx="13" cy="13" r="12" fill="#dd4535"/><path d="M13 13 L2.6 7 A12 12 0 0 0 13 25 Z" fill="#2a9a48"/><path d="M13 13 L13 25 A12 12 0 0 0 23.4 7 Z" fill="#f8c420"/><path d="M13 13 L2.6 7 A12 12 0 0 1 23.4 7 Z" fill="#dd4535"/><circle cx="13" cy="13" r="5.6" fill="#fff"/><circle cx="13" cy="13" r="4.3" fill="#3a78e8"/></svg>
  <!-- qgis -->
  <svg class="abs" style="left:272px;top:8px" width="26" height="25" viewBox="0 0 26 25"><circle cx="12" cy="11.5" r="8.5" fill="none" stroke="#8ab83a" stroke-width="4.5"/><path d="M13 12 L22 22" stroke="#8ab83a" stroke-width="4.5"/><circle cx="12.5" cy="11.5" r="2.2" fill="#e8a030"/></svg>
  <!-- chrome profile -->
  <svg class="abs" style="left:324px;top:8px" width="27" height="26" viewBox="0 0 27 26"><circle cx="13" cy="13" r="12" fill="#dd4535"/><path d="M13 13 L2.6 7 A12 12 0 0 0 13 25 Z" fill="#2a9a48"/><path d="M13 13 L13 25 A12 12 0 0 0 23.4 7 Z" fill="#f8c420"/><path d="M13 13 L2.6 7 A12 12 0 0 1 23.4 7 Z" fill="#dd4535"/><circle cx="13" cy="13" r="5.6" fill="#fff"/><circle cx="13" cy="13" r="4.3" fill="#3a78e8"/><circle cx="20" cy="19.5" r="6.5" fill="#9a7a6a"/></svg>
  <div class="abs" style="left:316px;top:39px;width:42px;height:2px;background:#7ab0e0"></div>
  <!-- zoom active -->
  <div class="abs" style="left:363px;top:0;width:47px;height:41px;background:#2e2e2e"></div>
  <div class="abs" style="left:376px;top:9px;width:25px;height:25px;border-radius:50%;background:#1e6ef5"></div>
  <div class="t" style="left:376px;top:17.5px;width:25px;text-align:center;font-size:8px;font-weight:700;color:#e8f0ff;letter-spacing:-0.3px">zoom</div>
  <div class="abs" style="left:363px;top:39px;width:47px;height:2px;background:#7ab0e0"></div>
  <!-- eye app -->
  <svg class="abs" style="left:426px;top:9px" width="26" height="22" viewBox="0 0 26 22"><g fill="#f0b020"><circle cx="3.5" cy="8" r="1.8"/><circle cx="8" cy="4" r="1.8"/><circle cx="13" cy="2.6" r="1.8"/><circle cx="18" cy="4" r="1.8"/><circle cx="22.5" cy="8" r="1.8"/></g><path d="M2 13 C6 8 19 8 24 13 C19 19 7 19 2 13 Z" fill="none" stroke="#f0b020" stroke-width="2"/><circle cx="13" cy="13" r="3.2" fill="#c02828"/></svg>
  <div class="abs" style="left:419px;top:39px;width:43px;height:2px;background:#7ab0e0"></div>
  <!-- tray -->
  <svg class="abs" style="left:1309px;top:11px" width="18" height="18" viewBox="0 0 18 18"><path d="M6 0.5 H12 V6 H17.5 V12 H12 V17.5 H6 V12 H0.5 V6 H6 Z" fill="#5aa838"/><rect x="3" y="7" width="12" height="4" fill="#8ac858"/></svg>
  <div class="abs" style="left:1334.5px;top:11px;width:18px;height:18px;border-radius:50%;background:#1e62e0"></div>
  <div class="t" style="left:1334.5px;top:16px;width:18px;text-align:center;font-size:8px;font-weight:700;color:#fff">zm</div>
  <svg class="abs" style="left:1359px;top:12px" width="19" height="16" viewBox="0 0 19 16" fill="none" stroke="#e8e8e8" stroke-width="1.1"><path d="M1 5.5 H4 L8 2 V14 L4 10.5 H1 Z"/><path d="M10.5 6 C11.5 7 11.5 9 10.5 10 M13 4 C15 6 15 10 13 12 M15.5 2 C18.5 5 18.5 11 15.5 14"/></svg>
  <div class="abs" style="left:1384px;top:10px;width:19px;height:20px;background:#0e1a2a;border-radius:2px"></div>
  <svg class="abs" style="left:1386px;top:16px" width="16" height="8" viewBox="0 0 16 8" fill="none" stroke="#8aa8c8" stroke-width="1.2"><path d="M1 1.5 L3.5 6.5 L6 1.5 L8.5 6.5 L11 1.5 M12.5 6.5 L15 1"/></svg>
  <svg class="abs" style="left:1410px;top:11px" width="18" height="19" viewBox="0 0 18 19"><circle cx="9" cy="9.5" r="8" fill="#2a6ad8"/><circle cx="8" cy="9" r="4" fill="#c8d8f0"/><circle cx="13" cy="14" r="3.2" fill="#e0202a"/></svg>
  <svg class="abs" style="left:1435px;top:13px" width="18" height="13" viewBox="0 0 18 13"><rect x="1" y="3" width="15" height="8" fill="none" stroke="#e8e8e8" stroke-width="1.2"/><rect x="3" y="5" width="11" height="4" fill="#e8e8e8"/><rect x="16.2" y="5.5" width="1.5" height="3" fill="#e8e8e8"/><path d="M2 0.5 V3" stroke="#e8e8e8" stroke-width="1.2"/></svg>
  <svg class="abs" style="left:1461px;top:12px" width="16" height="16" viewBox="0 0 16 16" fill="none" stroke="#d8d8d8" stroke-width="1.1"><path d="M1 15 A14 14 0 0 1 15 1 M4 15 A11 11 0 0 1 15 4 M7 15 A8 8 0 0 1 15 7"/><circle cx="13.5" cy="13.5" r="1.3" fill="#d8d8d8"/></svg>
  <div class="t" style="left:1488px;top:14.5px;font-size:12.5px;color:#ececec">FRA</div>
  <div class="t" style="left:1540.5px;top:4.5px;font-size:12px;color:#ececec">21:33</div>
  <div class="t" style="left:1525px;top:23.5px;font-size:12.3px;color:#ececec">07/10/2025</div>
  <div class="abs" style="left:1595px;top:0;width:1px;height:41px;background:#5a5a5a"></div>
</div>

</body></html>
